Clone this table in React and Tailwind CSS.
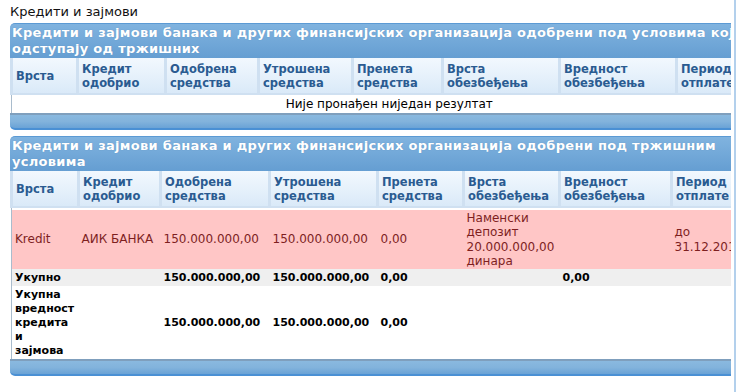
import React from "react";

const cols1 = [66, 88, 93, 94, 90, 117, 117, 90];
const cols2 = [67, 82, 109, 108, 86, 96, 112, 100];

const headers = [
  ["Врста"],
  ["Кредит", "одобрио"],
  ["Одобрена", "средства"],
  ["Утрошена", "средства"],
  ["Пренета", "средства"],
  ["Врста", "обезбеђења"],
  ["Вредност", "обезбеђења"],
  ["Период", "отплате"],
];

const PanelHeader = ({ lines }) => (
  <div className="rounded-tl-[5px] border-t border-[#5b9ad4] bg-gradient-to-b from-[#80b3df] to-[#659ed2] px-[2px] pt-px pb-[1px] text-[13px] font-bold leading-[16px] tracking-[0.3px] text-white [text-shadow:0_0_1px_#5a8cba]">
    {lines.map((l) => (
      <div key={l} className="whitespace-nowrap">
        {l}
      </div>
    ))}
  </div>
);

const HeadRow = () => (
  <tr className="bg-gradient-to-b from-[#f2f8fe] via-[#e6f1fb] to-[#d9e9f8]">
    {headers.map((h, i) => (
      <th
        key={i}
        className="h-[36px] border-l-[3px] border-b-2 border-[#cfe0f1] pl-[3px] text-left align-middle text-[11.5px] font-bold leading-[14px] text-[#2a5b91]"
      >
        {h.map((t) => (
          <div key={t}>{t}</div>
        ))}
      </th>
    ))}
  </tr>
);

const Footer = () => (
  <div className="h-[17px] rounded-bl-[5px] border-t-2 border-b-2 border-t-[#7f9fbd] border-b-[#4a90d4] bg-gradient-to-b from-[#8ab9df] via-[#82b3dc] to-[#6aa3d6]" />
);

const Cols = ({ w }) => (
  <colgroup>
    {w.map((x, i) => (
      <col key={i} style={{ width: x }} />
    ))}
  </colgroup>
);

export default function App() {
  return (
    <div className="min-h-[392px] w-[736px] border-r-2 border-[#b3d0ec] bg-white font-['DejaVu_Sans',sans-serif] text-black">
      <div className="w-[731px] overflow-hidden pl-[10px]">
        <div className="pt-[4px] pb-[3px] text-[13px] leading-[16px] text-[#111]">
          Кредити и зајмови
        </div>

        {/* Panel 1 */}
        <div className="w-[775px]">
          <PanelHeader
            lines={[
              "Кредити и зајмови банака и других финансијских организација одобрени под условима који",
              "одступају од тржишних",
            ]}
          />
          <table className="table-fixed border-collapse border-l border-[#a9bccd]" style={{ width: 755 }}>
            <Cols w={cols1} />
            <thead>
              <HeadRow />
            </thead>
            <tbody>
              <tr>
                <td colSpan={8} className="h-[19px] text-center text-[12px] leading-[14px]">
                  Није пронађен ниједан резултат
                </td>
              </tr>
            </tbody>
          </table>
          <Footer />
        </div>

        {/* Panel 2 */}
        <div className="mt-[6px] w-[775px]">
          <PanelHeader
            lines={[
              "Кредити и зајмови банака и других финансијских организација одобрени под тржишним",
              "условима",
            ]}
          />
          <table className="table-fixed border-collapse border-l border-[#a9bccd]" style={{ width: 760 }}>
            <Cols w={cols2} />
            <thead>
              <HeadRow />
            </thead>
            <tbody>
              <tr>
                <td colSpan={8} className="h-[3px] p-0" />
              </tr>
              <tr className="bg-[#ffc6c6] text-[12px] leading-[14.5px] text-[#7e1f1f]">
                <td className="h-[59px] pl-[3px]">Kredit</td>
                <td className="pl-[3px] whitespace-nowrap">АИК БАНКА</td>
                <td className="pl-[3px]">150.000.000,00</td>
                <td className="pl-[3px]">150.000.000,00</td>
                <td className="pl-[3px]">0,00</td>
                <td className="pl-[3px]">
                  Наменски
                  <br />
                  депозит
                  <br />
                  20.000.000,00
                  <br />
                  динара
                </td>
                <td className="pl-[3px]"></td>
                <td className="pl-[3px] whitespace-nowrap">
                  до
                  <br />
                  31.12.2015.
                </td>
              </tr>
              <tr className="bg-[#efefef] text-[11px] font-bold leading-[14px]">
                <td className="h-[17px] pl-[3px]">Укупно</td>
                <td></td>
                <td className="pl-[3px]">150.000.000,00</td>
                <td className="pl-[3px]">150.000.000,00</td>
                <td className="pl-[3px]">0,00</td>
                <td></td>
                <td className="pl-[3px]">0,00</td>
                <td></td>
              </tr>
              <tr className="text-[11px] font-bold leading-[14px]">
                <td className="h-[73px] pl-[3px]">
                  Укупна
                  <br />
                  вредност
                  <br />
                  кредита
                  <br />и
                  <br />
                  зајмова
                </td>
                <td></td>
                <td className="pl-[3px]">150.000.000,00</td>
                <td className="pl-[3px]">150.000.000,00</td>
                <td className="pl-[3px]">0,00</td>
                <td></td>
                <td></td>
                <td></td>
              </tr>
            </tbody>
          </table>
          <Footer />
        </div>
      </div>
    </div>
  );
}
